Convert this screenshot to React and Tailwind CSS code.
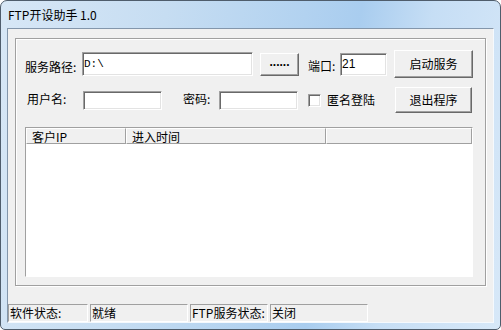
const sunken = 'border border-t-[#a0a0a0] border-l-[#a0a0a0] border-r-white border-b-white shadow-[inset_1px_1px_0_#696969,inset_-1px_-1px_0_#e3e3e3] bg-white';
const raised = 'border border-t-white border-l-white border-r-[#696969] border-b-[#696969] shadow-[inset_-1px_-1px_0_#a0a0a0] bg-[#f0f0f0]';
const pane = 'border border-t-[#a0a0a0] border-l-[#a0a0a0] border-r-white border-b-white pl-[1px] leading-[16px]';
const headCell = 'border border-t-white border-l-white border-r-[#a0a0a0] border-b-[#a0a0a0] pl-[5px] leading-[15px]';

export default function App() {
  return (
    <div className="h-[330px] w-[501px] bg-white text-[12px] text-black [font-family:'Noto_Sans_CJK_SC','Liberation_Sans',sans-serif]">
      <div className="flex h-full flex-col rounded-t-[7px] rounded-b-[5px] border border-[#4f5d6c] bg-[linear-gradient(100deg,#d7e7f6_0%,#c6ddf2_30%,#b2d2f0_55%,#a9cdef_65%,#c6def5_78%,#d7e8f8_100%)]">
        <div className="flex h-[27px] items-center pl-[7px]">FTP开设助手 1.0</div>
        <div className="flex flex-1 px-[6px] pb-[6px]">
          <div className="flex flex-1 flex-col border border-t-[#8396ab] border-l-[#8396ab] border-r-[#f5f9fd] border-b-[#f5f9fd] bg-[#f0f0f0]">
            <div className="ml-[7px] mt-[9px] flex h-[248px] w-[471px] flex-col border border-[#a0a0a0] shadow-[1px_1px_0_#fff,inset_1px_1px_0_#fff]">
              <div className="mt-[11px] flex h-[28px] items-center">
                <div className="ml-[9px] w-[57px] pt-[5px]">服务路径:</div>
                <div className={`${sunken} flex h-[24px] w-[171px] items-center pl-[1px] font-['Liberation_Mono',monospace] text-[11px]`}>D:\</div>
                <button className={`${raised} ml-[7px] h-[23px] w-[39px] pb-[5px] font-bold font-['Liberation_Sans',sans-serif] leading-none`}>......</button>
                <div className="ml-[9px] w-[32px] pt-[4px]">端口:</div>
                <div className={`${sunken} flex h-[23px] w-[47px] items-center pl-[1px] font-['Liberation_Sans',sans-serif] text-[12px]`}>21</div>
                <button className={`${raised} ml-[7px] h-[28px] w-[79px]`}>启动服务</button>
              </div>
              <div className="mt-[9px] flex h-[26px] items-center">
                <div className="ml-[11px] w-[56px] pb-[2px]">用户名:</div>
                <div className={`${sunken} h-[19px] w-[79px]`} />
                <div className="ml-[21px] w-[36px] pb-[2px]">密码:</div>
                <div className={`${sunken} h-[19px] w-[79px]`} />
                <div className={`${sunken} ml-[10px] h-[13px] w-[13px]`} />
                <div className="ml-[6px] w-[48px]">匿名登陆</div>
                <button className={`${raised} ml-[20px] h-[26px] w-[77px]`}>退出程序</button>
              </div>
              <div className="ml-[9px] mt-[14px] flex h-[150px] w-[448px] flex-col border border-t-[#a0a0a0] border-l-[#a0a0a0] border-r-white border-b-white bg-white">
                <div className="flex h-[16px] bg-[#f0f0f0]">
                  <div className={`${headCell} w-[100px]`}>客户IP</div>
                  <div className={`${headCell} w-[200px]`}>进入时间</div>
                  <div className={`${headCell} flex-1`} />
                </div>
              </div>
            </div>
            <div className="mt-[18px] flex h-[18px] gap-[2px]">
              <div className={`${pane} w-[80px]`}>软件状态:</div>
              <div className={`${pane} w-[98px]`}>就绪</div>
              <div className={`${pane} w-[78px]`}>FTP服务状态:</div>
              <div className={`${pane} w-[98px]`}>关闭</div>
            </div>
          </div>
        </div>
      </div>
    </div>
  );
}
